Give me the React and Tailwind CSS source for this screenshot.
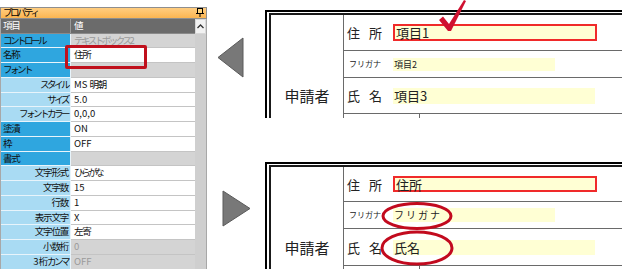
import React from "react";

const rows = [
  { l: "コントロール", cat: true, v: "テキストボックス2", dis: true },
  { l: "名称", cat: true, v: "住所" },
  { l: "フォント", cat: true, v: "", dis: true },
  { l: "スタイル", v: "MS 明朝" },
  { l: "サイズ", v: "5.0" },
  { l: "フォントカラー", v: "0,0,0" },
  { l: "塗潰", cat: true, v: "ON" },
  { l: "枠", cat: true, v: "OFF" },
  { l: "書式", cat: true, v: "", dis: true },
  { l: "文字形式", v: "ひらがな" },
  { l: "文字数", v: "15" },
  { l: "行数", v: "1" },
  { l: "表示文字", v: "X" },
  { l: "文字位置", v: "左寄" },
  { l: "小数桁", v: "0", dis: true },
  { l: "3桁カンマ", v: "OFF", dis: true },
];

function T({ children }) {
  const s = String(children || "");
  return (
    <span className="whitespace-nowrap">
      {Array.from(s).map((c, i) => {
        let ls = "0px";
        if (/[\u3040-\u30ff]/.test(c)) ls = "-2.5px";
        else if (/[\u4e00-\u9fff]/.test(c)) ls = "-1.2px";
        return (
          <span key={i} style={{ letterSpacing: ls }}>
            {c}
          </span>
        );
      })}
    </span>
  );
}

function LeftPanel() {
  return (
    <div className="w-[207px] shrink-0 flex flex-col pt-[7px] text-[9.5px] leading-none">
      <div className="h-[13px] border border-[#8e8e8e] bg-gradient-to-b from-[#ffcd80] to-[#fbb550] flex items-center justify-between pl-[2px] pr-[2px]">
        <span className="text-black">
          <T>プロパティ</T>
        </span>
        <svg width="8" height="9" viewBox="0 0 8 9">
          <rect x="1.5" y="0.5" width="5" height="5" fill="#ffd27a" stroke="#000" />
          <rect x="0" y="5" width="8" height="1" fill="#000" />
          <rect x="3.5" y="6" width="1" height="3" fill="#000" />
        </svg>
      </div>
      <div className="h-[1px] bg-[#b0b0b0]" />
      <div className="flex-1 flex bg-[#a8a8a8] pl-[1px]">
        <div className="w-[194px] flex flex-col">
          <div className="h-[15px] flex bg-[#6b6b6b] text-white border-b border-[#8a8a8a]">
            <div className="w-[70px] flex items-center pl-[2px] border-r border-[#9a9a9a]">
              <T>項目</T>
            </div>
            <div className="flex-1 flex items-center pl-[3px]">
              <T>値</T>
            </div>
          </div>
          {rows.map((r, i) => (
            <div key={i} className="h-[14.75px] flex shrink-0">
              <div
                className={
                  "w-[70px] flex items-center border-b border-r border-[#e8f4fb] text-[#111] overflow-hidden " +
                  (r.cat ? "bg-[#2fa6df] pl-[2px]" : "bg-[#a9dbf3] justify-end pr-[2px]")
                }
              >
                <T>{r.l}</T>
              </div>
              <div
                className={
                  "flex-1 flex items-center pl-[3px] border-b border-[#c4c4c4] overflow-hidden " +
                  (r.dis ? "bg-[#d4d4d4] text-[#9a9a9a]" : "bg-white text-[#111]")
                }
              >
                <T>{r.v}</T>
              </div>
            </div>
          ))}
        </div>
        <div className="w-[11px] flex flex-col bg-[#cfcfcf]">
          <div className="h-[15px] bg-[#f2f2f2] border border-[#d8d8d8] flex items-center justify-center">
            <svg width="7" height="5" viewBox="0 0 7 5">
              <path d="M0.5 4 L3.5 1 L6.5 4" fill="none" stroke="#333" strokeWidth="1.3" />
            </svg>
          </div>
        </div>
      </div>
    </div>
  );
}

function Field({ w, h, text, size, red, tracking }) {
  return (
    <div
      className={
        "flex items-center bg-[#ffffd4] text-[#222] pl-[1px] " +
        (red ? "border-2 border-[#f02a2a]" : "")
      }
      style={{ width: w, height: h }}
    >
      <span style={{ fontSize: size, letterSpacing: tracking || 0 }} className="leading-none">
        {text}
      </span>
    </div>
  );
}

function Form({ fields, heights, totalH }) {
  return (
    <div
      className="w-[400px] border-l-2 border-t-2 border-black pl-[2px] pt-[1px] overflow-hidden bg-white"
      style={{ height: totalH }}
    >
      <div className="h-[200px] border-l-2 border-t-2 border-[#1a1a1a] flex">
        <div className="w-[73px] shrink-0 border-r border-[#6a6a6a] flex justify-center pt-[71px]">
          <span className="text-[15px] leading-[20px] text-[#222]">申請者</span>
        </div>
        <div className="flex-1 flex flex-col">
          <div className="flex items-center border-b border-[#6a6a6a]" style={{ height: heights[0] }}>
            <div className="w-[49px] pl-[3px] text-[13px] leading-none text-[#222] flex gap-[9px]">
              <span>住</span>
              <span>所</span>
            </div>
            {fields[0]}
          </div>
          <div className="flex items-center border-b border-[#6a6a6a]" style={{ height: heights[1] }}>
            <div className="w-[49px] pl-[5px] text-[8px] leading-none text-[#222]">フリガナ</div>
            {fields[1]}
          </div>
          <div className="flex items-center border-b border-[#6a6a6a]" style={{ height: heights[2] }}>
            <div className="w-[49px] pl-[3px] text-[13px] leading-none text-[#222] flex gap-[9px]">
              <span>氏</span>
              <span>名</span>
            </div>
            {fields[2]}
          </div>
          <div className="flex-1 flex">
            <div className="w-[76px] border-r border-[#6a6a6a]" />
          </div>
        </div>
      </div>
    </div>
  );
}

export default function App() {
  return (
    <div
      className="relative w-[622px] h-[269px] overflow-hidden bg-white flex"
      style={{ fontFamily: '"Noto Sans CJK JP", "Noto Sans", sans-serif' }}
    >
      <LeftPanel />
      <div className="flex-1 flex flex-col">
        <div className="h-[152px] flex shrink-0">
          <div className="w-[58px] shrink-0 pl-[10px] pt-[37px]">
            <svg width="27" height="42" viewBox="0 0 27 42">
              <path d="M1 20.5 L26 1 L26 40 Z" fill="#787878" stroke="#5a5a5a" strokeWidth="1" />
            </svg>
          </div>
          <div className="pt-[10px]">
            <Form
              totalH={108}
              heights={[36, 27, 36]}
              fields={[
                <Field key="a" w={204} h={17} text="項目1" size={13} red />,
                <Field key="b" w={162} h={13} text="項目2" size={9} />,
                <Field key="c" w={202} h={16} text="項目3" size={13} />,
              ]}
            />
          </div>
        </div>
        <div className="flex flex-1">
          <div className="w-[58px] shrink-0 pl-[15px] pt-[38px]">
            <svg width="29" height="37" viewBox="0 0 29 37">
              <path d="M1 1 L28 18.5 L1 36 Z" fill="#787878" stroke="#5a5a5a" strokeWidth="1" />
            </svg>
          </div>
          <div className="pt-[10px]">
            <Form
              totalH={107}
              heights={[35, 27, 37]}
              fields={[
                <Field key="a" w={204} h={16} text="住所" size={13} red />,
                <Field key="b" w={162} h={14} text="フリガナ" size={10} tracking="2px" />,
                <Field key="c" w={202} h={15} text="氏名" size={13} />,
              ]}
            />
          </div>
        </div>
      </div>

      {/* annotations */}
      <div className="absolute left-[65px] top-[45px] w-[82px] h-[24px] border-[3px] border-[#c0101c] rounded-[2px]" />
      <svg className="absolute left-[438px] top-0" width="30" height="32" viewBox="0 0 30 32">
        <path d="M1 20 L5 16.5 L11 24 L26 0 L28 1 L13 31 L10 31 Z" fill="#cf1130" />
      </svg>
      <svg className="absolute left-[378px] top-[200px]" width="80" height="69" viewBox="0 0 80 69">
        <ellipse cx="39" cy="16" rx="34" ry="12.5" fill="none" stroke="#c20a1e" strokeWidth="3" />
        <ellipse cx="39" cy="48" rx="35" ry="16" fill="none" stroke="#c20a1e" strokeWidth="3" />
      </svg>
    </div>
  );
}
